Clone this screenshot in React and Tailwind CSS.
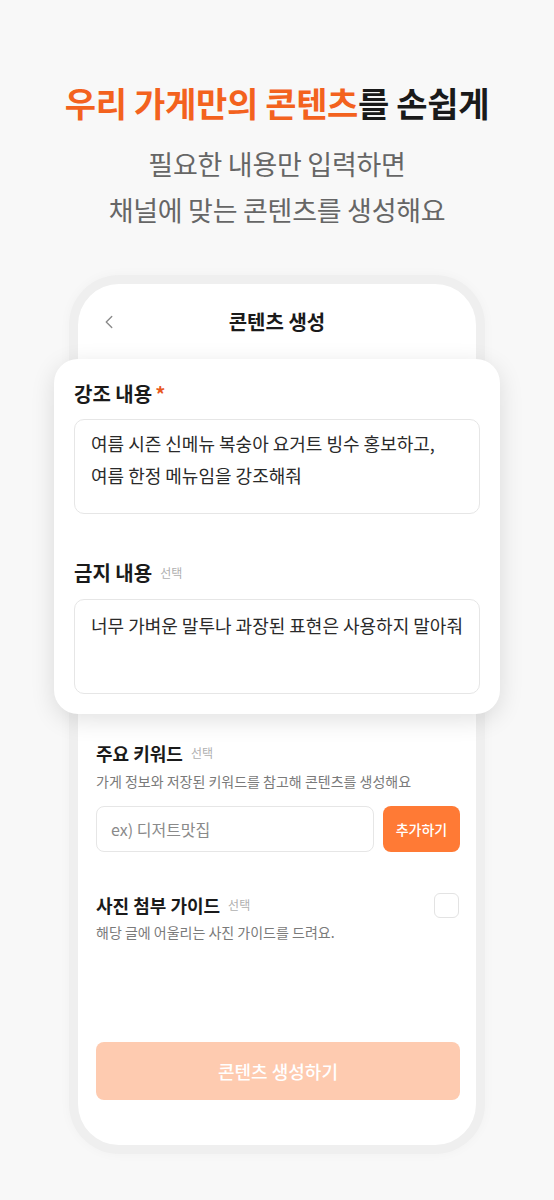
import { ChevronLeft } from "lucide-react";

const font = { fontFamily: '"Noto Sans CJK KR", "Noto Sans", sans-serif' };

function Optional() {
  return <span className="ml-2 text-[12px] font-normal text-[#b0b0b0]">선택</span>;
}

export default function App() {
  return (
    <div style={font} className="flex min-h-[1200px] w-full flex-col items-center bg-[#f8f8f8] text-[#1a1a1a]">
      <h1 className="mt-[80px] text-[34px] font-bold leading-[46px] tracking-[-0.01em]">
        <span className="text-[#f3621e]">우리 가게만의 콘텐츠</span>를 손쉽게
      </h1>
      <p className="mt-[15px] text-center text-[27px] leading-[46px] tracking-[-0.01em] text-[#666666]">
        필요한 내용만 입력하면
        <br />
        채널에 맞는 콘텐츠를 생성해요
      </p>

      <div className="mt-[42px] w-[416px] rounded-[50px] bg-[#efefef] p-[9px] shadow-[0_0_12px_rgba(0,0,0,0.03)]">
        <div className="rounded-[41px] bg-white">
          <div className="relative flex h-[75px] items-center justify-center">
            <ChevronLeft className="absolute left-[20px] text-[#8a8a8a]" size={22} strokeWidth={1.5} />
            <span className="text-[20px] font-bold">콘텐츠 생성</span>
          </div>

          <div className="-mx-[24px] rounded-[24px] bg-white px-[20px] pb-[20px] pt-[22px] shadow-[0_6px_24px_rgba(0,0,0,0.12)]">
            <div className="flex items-center text-[20px] font-bold leading-[26px]">
              강조 내용<span className="ml-[3px] text-[#e8591f]">*</span>
            </div>
            <div className="mt-[12px] h-[95px] whitespace-nowrap rounded-[10px] border border-[#e6e6e6] px-[16px] pt-[7px] text-[18px] leading-[32px] text-[#2a2a2a]">
              여름 시즌 신메뉴 복숭아 요거트 빙수 홍보하고,
              <br />
              여름 한정 메뉴임을 강조해줘
            </div>

            <div className="mt-[46px] flex items-center text-[20px] font-bold leading-[26px]">
              금지 내용
              <Optional />
            </div>
            <div className="mt-[13px] h-[95px] whitespace-nowrap rounded-[10px] border border-[#e6e6e6] px-[16px] pt-[9px] text-[18px] leading-[32px] text-[#2a2a2a]">
              너무 가벼운 말투나 과장된 표현은 사용하지 말아줘
            </div>
          </div>

          <div className="pl-[18px] pr-[16px] pb-[45px] pt-[27px]">
            <div className="flex items-center text-[18px] font-bold leading-[24px]">
              주요 키워드
              <Optional />
            </div>
            <p className="mt-[6px] text-[14px] leading-[20px] text-[#7a7a7a]">
              가게 정보와 저장된 키워드를 참고해 콘텐츠를 생성해요
            </p>
            <div className="mt-[15px] flex gap-[9px]">
              <div className="flex h-[46px] flex-1 items-center rounded-[8px] border border-[#e6e6e6] px-[14px] text-[16px] text-[#8a8a8a]">
                ex) 디저트맛집
              </div>
              <button className="h-[46px] w-[77px] rounded-[8px] bg-[#ff7a35] text-[14px] font-medium text-white">
                추가하기
              </button>
            </div>

            <div className="mt-[41px] flex items-start justify-between">
              <div>
                <div className="flex items-center text-[18px] font-bold leading-[24px]">
                  사진 첨부 가이드
                  <Optional />
                </div>
                <p className="mt-[5px] text-[14px] leading-[20px] text-[#7a7a7a]">
                  해당 글에 어울리는 사진 가이드를 드려요.
                </p>
              </div>
              <div className="mr-[1px] h-[25px] w-[25px] rounded-[6px] border border-[#e3e3e3]" />
            </div>

            <button className="mt-[100px] flex h-[58px] w-full items-center justify-center rounded-[8px] bg-[#fecbb0] text-[18px] font-medium text-white">
              콘텐츠 생성하기
            </button>
          </div>
        </div>
      </div>
    </div>
  );
}
